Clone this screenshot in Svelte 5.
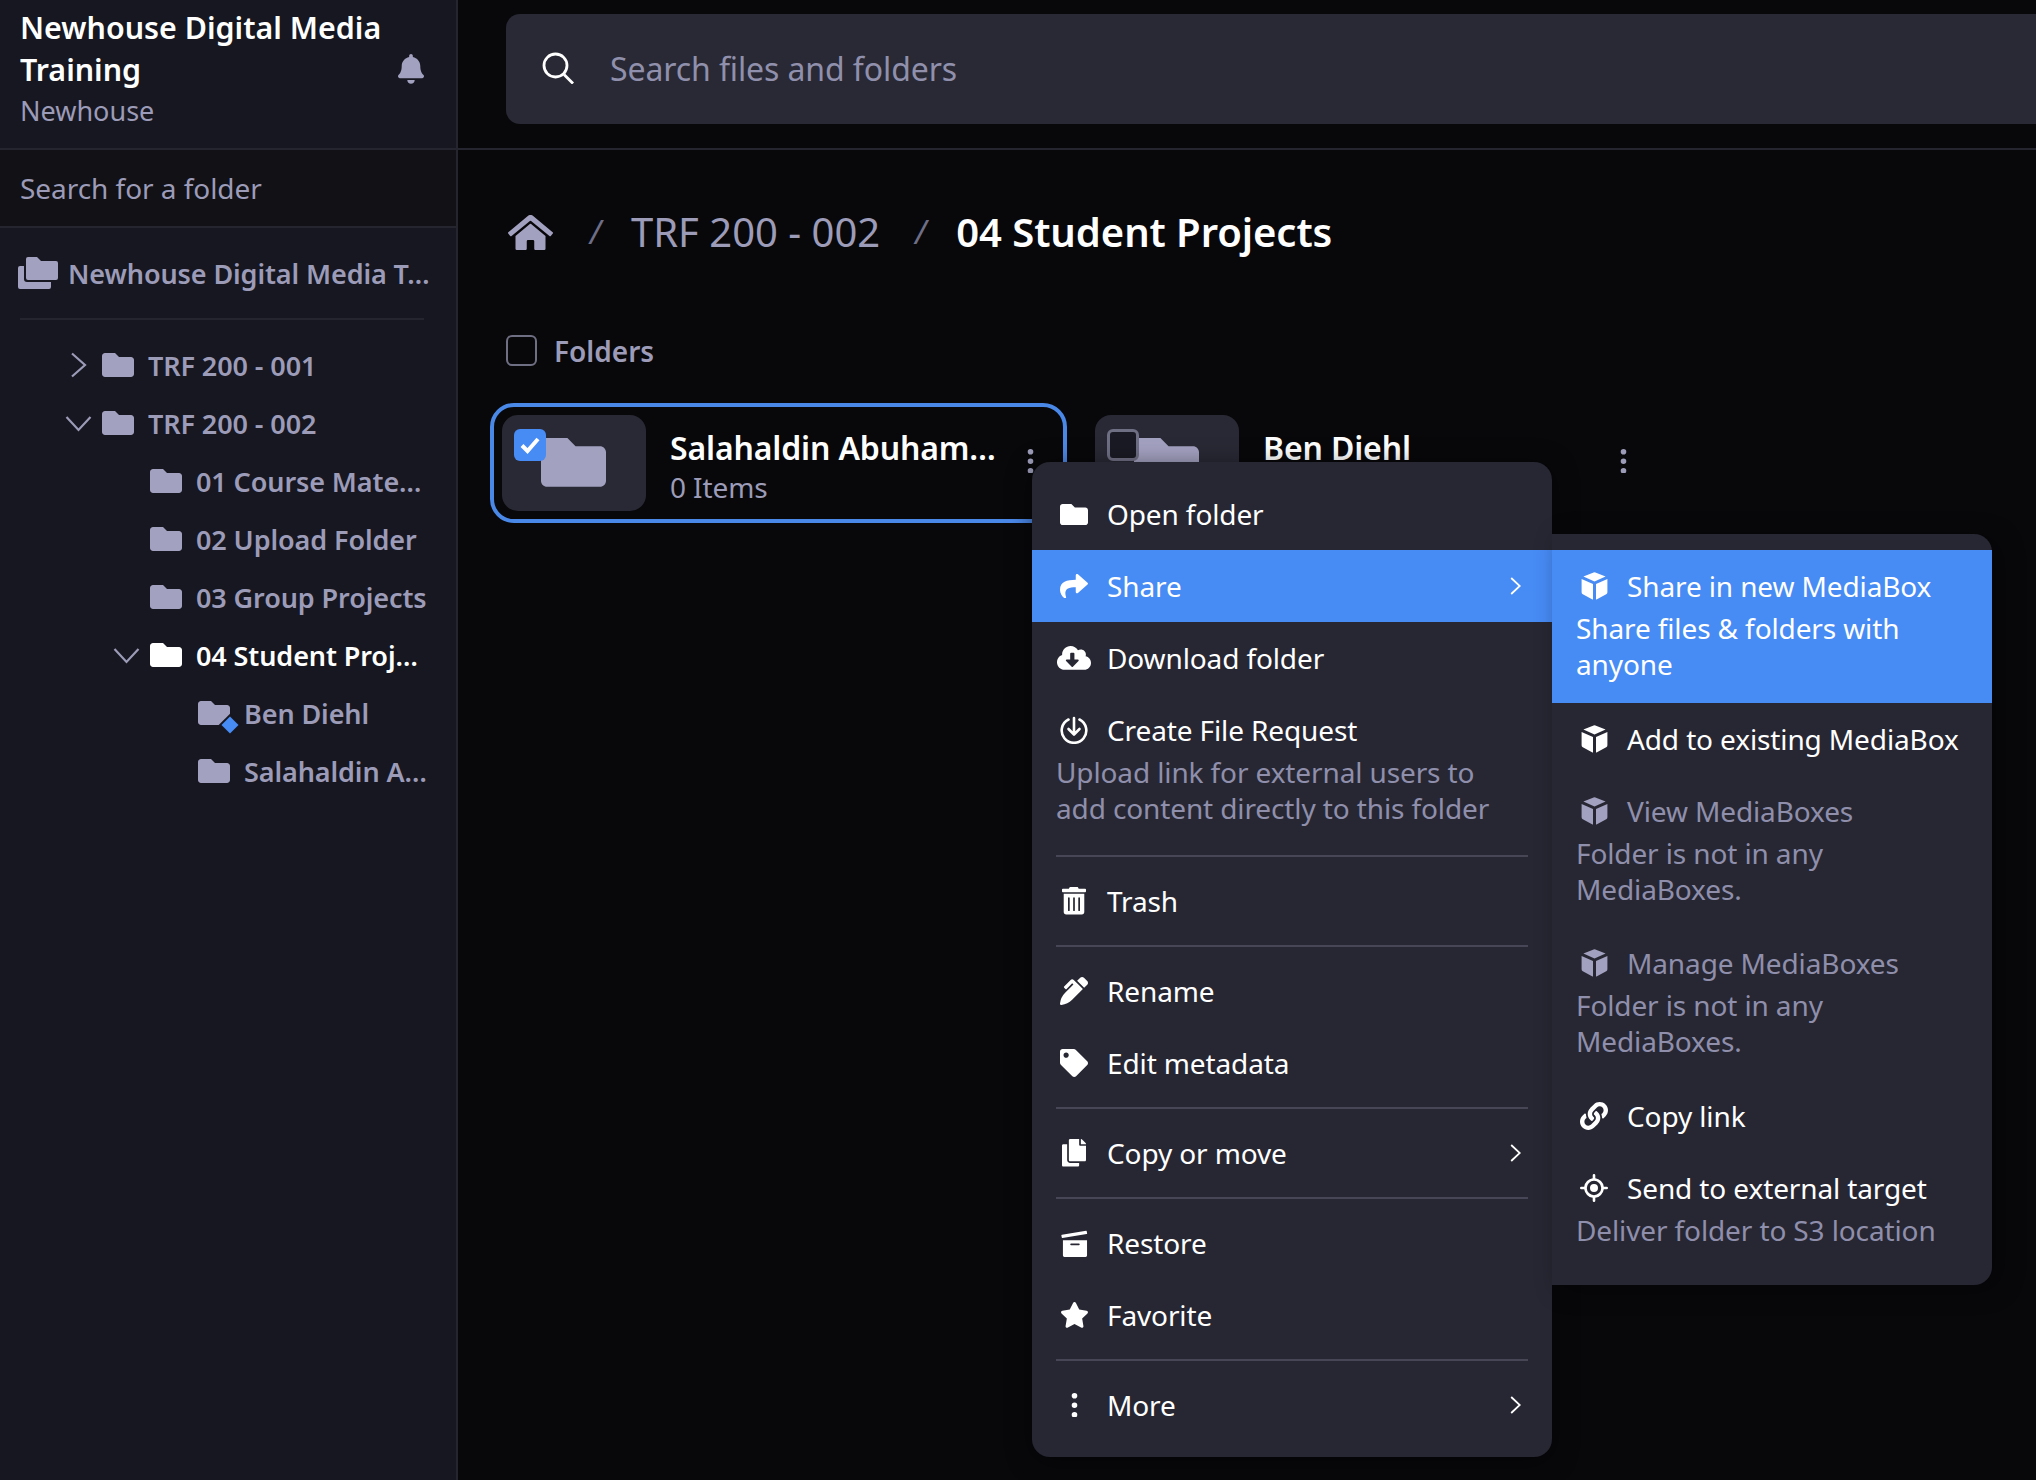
<script>
  const icons = {
    folder: { vb: '0 64 512 384', d: 'M464 128H272l-64-64H48C21.49 64 0 85.49 0 112v288c0 26.51 21.49 48 48 48h416c26.51 0 48-21.49 48-48V176c0-26.51-21.49-48-48-48z' },
    folders: { vb: '0 0 40 32', d: 'M0 11a2 2 0 0 1 2-2h4v13a3 3 0 0 0 3 3h24v5a2 2 0 0 1-2 2H2a2 2 0 0 1-2-2zM8 2a2 2 0 0 1 2-2h9l4 4h15a2 2 0 0 1 2 2v15a2 2 0 0 1-2 2H10a2 2 0 0 1-2-2z' },
    bell: { vb: '0 0 448 512', d: 'M224 512c35.32 0 63.97-28.65 63.97-64H160.03c0 35.35 28.65 64 63.97 64zm215.39-149.71c-19.32-20.76-55.47-51.99-55.47-154.29 0-77.7-54.48-139.9-127.94-155.16V32c0-17.67-14.32-32-31.98-32s-31.98 14.33-31.98 32v20.84C118.56 68.1 64.08 130.3 64.08 208c0 102.3-36.15 133.53-55.47 154.29-6 6.45-8.66 14.16-8.61 21.71.11 16.4 12.98 32 32.1 32h383.8c19.12 0 32-15.6 32.1-32 .05-7.55-2.61-15.27-8.61-21.71z' },
    home: { vb: '0 32 576 448', d: 'M280.37 148.26L96 300.11V464a16 16 0 0 0 16 16l112.06-.29a16 16 0 0 0 15.92-16V368a16 16 0 0 1 16-16h64a16 16 0 0 1 16 16v95.64a16 16 0 0 0 16 16.05L464 480a16 16 0 0 0 16-16V300L295.67 148.26a12.19 12.19 0 0 0-15.3 0zM571.6 251.47L318.47 43a48 48 0 0 0-61 0L4.34 251.47a12 12 0 0 0-1.6 16.9l25.5 31A12 12 0 0 0 45.15 301l235.22-193.74a12.19 12.19 0 0 1 15.3 0L530.9 301a12 12 0 0 0 16.9-1.6l25.5-31a12 12 0 0 0-1.7-16.93z' },
    share: { vb: '0 32 512 450', d: 'M503.691 189.836L327.687 37.851C312.281 24.546 288 35.347 288 56.015v80.053C127.371 137.907 0 170.1 0 322.326c0 61.441 39.581 122.309 83.333 154.132 13.653 9.931 33.111-2.533 28.077-18.631C66.066 312.814 132.917 274.316 288 272.085V360c0 20.7 24.3 31.453 39.687 18.164l176.004-152c11.071-9.562 11.086-26.753 0-36.328z' },
    cloud: { vb: '0 32 640 448', d: 'M537.6 226.6c4.1-10.7 6.4-22.4 6.4-34.6 0-53-43-96-96-96-19.7 0-38.1 6-53.3 16.2C367 64.2 315.3 32 256 32c-88.4 0-160 71.6-160 160 0 2.7.1 5.4.2 8.1C40.2 219.8 0 273.2 0 336c0 79.5 64.5 144 144 144h368c70.7 0 128-57.3 128-128 0-61.9-44-113.6-102.4-125.4zm-132.9 88.7L299.3 420.7c-6.2 6.2-16.4 6.2-22.6 0L171.3 315.3c-10.1-10.1-2.9-27.3 11.3-27.3H248V176c0-8.8 7.2-16 16-16h48c8.8 0 16 7.2 16 16v112h65.4c14.2 0 21.4 17.2 11.3 27.3z' },
    trash: { vb: '0 0 448 512', d: 'M32 464a48 48 0 0 0 48 48h288a48 48 0 0 0 48-48V128H32zm272-256a16 16 0 0 1 32 0v224a16 16 0 0 1-32 0zm-96 0a16 16 0 0 1 32 0v224a16 16 0 0 1-32 0zm-96 0a16 16 0 0 1 32 0v224a16 16 0 0 1-32 0zM432 32H312l-9.4-18.7A24 24 0 0 0 290.1 0H157.8a23.72 23.72 0 0 0-21.4 13.3L127 32H16A16 16 0 0 0 0 48v32a16 16 0 0 0 16 16h416a16 16 0 0 0 16-16V48a16 16 0 0 0-16-16z' },
    pen: { vb: '0 0 512 512', d: 'M497.94 74.17l-60.11-60.11c-18.75-18.75-49.16-18.75-67.91 0l-56.55 56.55 128.02 128.02 56.55-56.55c18.75-18.75 18.75-49.15 0-67.91zm-246.8-20.53c-15.62-15.62-40.94-15.62-56.56 0L75.8 172.43c-6.25 6.25-6.25 16.38 0 22.62l22.63 22.63c6.25 6.25 16.38 6.25 22.63 0l101.82-101.82 22.63 22.62L93.95 290.03A327.038 327.038 0 0 0 .17 485.11l-.03.23c-1.7 15.28 11.21 28.2 26.49 26.51a327.02 327.02 0 0 0 195.34-93.8l196.79-196.79-82.77-82.77-84.85-84.85z' },
    tag: { vb: '0 0 512 512', d: 'M0 252.118V48C0 21.49 21.49 0 48 0h204.118a48 48 0 0 1 33.941 14.059l211.882 211.882c18.745 18.745 18.745 49.137 0 67.882L293.823 497.941c-18.745 18.745-49.137 18.745-67.882 0L14.059 286.059A48 48 0 0 1 0 252.118zM112 64c-26.51 0-48 21.49-48 48s21.49 48 48 48 48-21.49 48-48-21.49-48-48-48z' },
    copy: { vb: '0 0 448 512', d: 'M320 448v40c0 13.255-10.745 24-24 24H24c-13.255 0-24-10.745-24-24V120c0-13.255 10.745-24 24-24h72v296c0 30.879 25.121 56 56 56h168zm0-344V0H152c-13.255 0-24 10.745-24 24v368c0 13.255 10.745 24 24 24h272c13.255 0 24-10.745 24-24V128H344c-13.2 0-24-10.8-24-24zm120.971-31.029L375.029 7.029A24 24 0 0 0 358.059 0H352v96h96v-6.059a24 24 0 0 0-7.029-16.97z' },
    restore: { vb: '0 0 28 28', d: 'M1 5L26 .8a.6.6 0 0 1 .7.5l.4 2.200a.6.6 0 0 1-.5.7L1.500 8.400a.6.6 0 0 1-.7-.5L.4 5.700A.6.6 0 0 1 1 5zM2 10.500h25v16a1.500 1.500 0 0 1-1.500 1.500h-22A1.500 1.500 0 0 1 2 26.500zm8.500 3.500a.9.9 0 0 0 0 1.800h8a.9.9 0 0 0 0-1.800z' },
    star: { vb: '0 0 576 512', d: 'M259.3 17.8L194 150.2 47.9 171.5c-26.2 3.8-36.7 36.1-17.7 54.6l105.7 103-25 145.5c-4.5 26.3 23.2 46 46.4 33.7L288 439.6l130.7 68.7c23.2 12.2 50.9-7.4 46.4-33.7l-25-145.5 105.7-103c19-18.5 8.5-50.8-17.7-54.6L382 150.2 316.7 17.8c-11.7-23.6-45.6-23.9-57.4 0z' },
    cube: { vb: '0 0 27 28', d: 'M12.600.4a2.400 2.400 0 0 1 1.800 0l10.200 4.100L13.500 9.400 2.400 4.500zM.6 7l11.400 5v15.500a2 2 0 0 1-1-.3L1.800 22.300A2.500 2.500 0 0 1 .6 20.200zM26.400 7l-11.400 5v15.500a2 2 0 0 0 1-.3l9.200-4.900a2.500 2.500 0 0 0 1.200-2.100z' },
    link: { vb: '0 0 512 512', d: 'M326.612 185.391c59.747 59.809 58.927 155.698.36 214.59-.11.12-.24.25-.36.37l-67.2 67.2c-59.27 59.27-155.699 59.262-214.96 0-59.27-59.26-59.27-155.7 0-214.96l37.106-37.106c9.84-9.84 26.786-3.3 27.294 10.606.648 17.722 3.826 35.527 9.69 52.721 1.986 5.822.567 12.262-3.783 16.612l-13.087 13.087c-28.026 28.026-28.905 73.66-1.155 101.96 28.024 28.579 74.086 28.749 102.325.51l67.2-67.19c28.191-28.191 28.073-73.757 0-101.83-3.701-3.694-7.429-6.564-10.341-8.569a16.037 16.037 0 0 1-6.947-12.606c-.396-10.567 3.348-21.456 11.698-29.806l21.054-21.055c5.521-5.521 14.182-6.199 20.584-1.731a152.482 152.482 0 0 1 20.522 17.197zM467.547 44.449c-59.261-59.262-155.69-59.27-214.96 0l-67.2 67.2c-.12.12-.25.25-.36.37-58.566 58.892-59.387 154.781.36 214.59a152.454 152.454 0 0 0 20.521 17.196c6.402 4.468 15.064 3.789 20.584-1.731l21.054-21.055c8.35-8.35 12.094-19.239 11.698-29.806a16.037 16.037 0 0 0-6.947-12.606c-2.912-2.005-6.64-4.875-10.341-8.569-28.073-28.073-28.191-73.639 0-101.83l67.2-67.19c28.239-28.239 74.3-28.069 102.325.51 27.75 28.3 26.872 73.934-1.155 101.96l-13.087 13.087c-4.35 4.35-5.769 10.79-3.783 16.612 5.864 17.194 9.042 34.999 9.69 52.721.509 13.906 17.454 20.446 27.294 10.606l37.106-37.106c59.271-59.259 59.271-155.699.001-214.959z' },
    target: { vb: '0 0 28 28', d: 'M14 0a1.300 1.300 0 0 1 1.300 1.300v2.900a10 10 0 0 1 8.500 8.500h2.900a1.300 1.300 0 0 1 0 2.600h-2.900a10 10 0 0 1-8.500 8.500v2.900a1.300 1.300 0 0 1-2.600 0v-2.900a10 10 0 0 1-8.500-8.500H1.300a1.300 1.300 0 0 1 0-2.600h2.900a10 10 0 0 1 8.500-8.500V1.300A1.300 1.300 0 0 1 14 0zm0 6.800a7.200 7.200 0 1 0 0 14.400 7.200 7.200 0 0 0 0-14.400zm0 3.200a4 4 0 1 1 0 8 4 4 0 0 1 0-8z' },
    dots: { vb: '0 0 8 28', d: 'M4 0a3.200 3.200 0 1 1 0 6.400A3.200 3.200 0 0 1 4 0zm0 10.800a3.200 3.200 0 1 1 0 6.400 3.200 3.200 0 0 1 0-6.400zm0 10.800a3.200 3.200 0 1 1 0 6.400 3.200 3.200 0 0 1 0-6.400z' }
  };

  const tree = [
    { label: 'TRF 200 - 001', depth: 0, chevron: 'right' },
    { label: 'TRF 200 - 002', depth: 0, chevron: 'down' },
    { label: '01 Course Mate…', depth: 1 },
    { label: '02 Upload Folder', depth: 1 },
    { label: '03 Group Projects', depth: 1 },
    { label: '04 Student Proj…', depth: 1, chevron: 'down', active: true },
    { label: 'Ben Diehl', depth: 2, badge: true },
    { label: 'Salahaldin A…', depth: 2 }
  ];

  const menu = [
    { icon: 'folder', w: 28, label: 'Open folder' },
    { icon: 'share', w: 28, label: 'Share', more: true, active: true },
    { icon: 'cloud', w: 34, label: 'Download folder' },
    { icon: 'request', w: 28, label: 'Create File Request', sub: ['Upload link for external users to', 'add content directly to this folder'] },
    { sep: true },
    { icon: 'trash', w: 24, label: 'Trash' },
    { sep: true },
    { icon: 'pen', w: 28, label: 'Rename' },
    { icon: 'tag', w: 28, label: 'Edit metadata' },
    { sep: true },
    { icon: 'copy', w: 24, label: 'Copy or move', more: true },
    { sep: true },
    { icon: 'restore', w: 27, label: 'Restore' },
    { icon: 'star', w: 29, label: 'Favorite' },
    { sep: true },
    { icon: 'dots', w: 7, label: 'More', more: true }
  ];

  const submenu = [
    { icon: 'cube', w: 27, label: 'Share in new MediaBox', sub: ['Share files & folders with', 'anyone'], active: true },
    { icon: 'cube', w: 27, label: 'Add to existing MediaBox' },
    { icon: 'cube', w: 27, label: 'View MediaBoxes', sub: ['Folder is not in any', 'MediaBoxes.'], disabled: true },
    { icon: 'cube', w: 27, label: 'Manage MediaBoxes', sub: ['Folder is not in any', 'MediaBoxes.'], disabled: true },
    { icon: 'link', w: 28, label: 'Copy link' },
    { icon: 'target', w: 28, label: 'Send to external target', sub: ['Deliver folder to S3 location'] }
  ];
</script>

{#snippet icon(name, w)}
  {#if name === 'request'}
    <svg class="ico" width={w} viewBox="0 0 28 28" fill="none" stroke="currentColor" stroke-width="2.600" stroke-linecap="round" stroke-linejoin="round">
      <path d="M8.500 3.500A12.300 12.300 0 1 0 19.500 3.500" />
      <path d="M14 2v16M8.500 13l5.500 5.500 5.500-5.500" />
    </svg>
  {:else}
    <svg class="ico" width={w} viewBox={icons[name].vb} fill="currentColor"><path d={icons[name].d} /></svg>
  {/if}
{/snippet}

{#snippet chevron(dir)}
  {#if dir === 'right'}
    <svg class="chev" width="17" height="26" viewBox="0 0 17 26" fill="none" stroke="currentColor" stroke-width="2.200"><path d="M2 1.500 15 13 2 24.500" /></svg>
  {:else}
    <svg class="chev" width="27" height="17" viewBox="0 0 27 17" fill="none" stroke="currentColor" stroke-width="2.200"><path d="M1.500 2 13.500 15 25.500 2" /></svg>
  {/if}
{/snippet}

{#snippet arrow()}
  <svg class="more" width="11" height="18" viewBox="0 0 11 18" fill="none" stroke="currentColor" stroke-width="1.800"><path d="M1.200 1 9.800 9 1.200 17" /></svg>
{/snippet}

{#snippet entry(item)}
  <div class="item" class:active={item.active} class:disabled={item.disabled} class:has-sub={item.sub}>
    <div class="item-head">
      <span class="item-icon">{@render icon(item.icon, item.w)}</span>
      <span class="item-label">{item.label}</span>
      {#if item.more}{@render arrow()}{/if}
    </div>
    {#if item.sub}
      <div class="item-sub">
        {#each item.sub as line}<div>{line}</div>{/each}
      </div>
    {/if}
  </div>
{/snippet}

<div class="page">
  <aside class="sidebar">
    <header class="org">
      <div class="org-text">
        <div class="org-name">Newhouse Digital Media<br />Training</div>
        <div class="org-sub">Newhouse</div>
      </div>
      <span class="bell">{@render icon('bell', 26)}</span>
    </header>
    <div class="folder-search">Search for a folder</div>
    <div class="root-row">
      <span class="root-icon">{@render icon('folders', 40)}</span>
      <span>Newhouse Digital Media T…</span>
    </div>
    <div class="root-line"></div>
    <nav class="tree">
      {#each tree as row}
        <div class="tree-row" class:active={row.active} style="padding-left: {60 + row.depth * 48}px">
          <span class="tree-slot">{#if row.chevron}{@render chevron(row.chevron)}{/if}</span>
          <span class="tree-folder">
            {@render icon('folder', 32)}
            {#if row.badge}<span class="diamond"></span>{/if}
          </span>
          <span class="tree-label">{row.label}</span>
        </div>
      {/each}
    </nav>
  </aside>

  <main class="main">
    <div class="topbar">
      <div class="search">
        <svg width="32" height="32" viewBox="0 0 32 32" fill="none" stroke="#fff" stroke-width="2.800"><circle cx="13.500" cy="13.500" r="11.500" /><path d="M22 22.500 31 31.500" /></svg>
        <span>Search files and folders</span>
      </div>
    </div>
    <div class="content">
      <div class="crumbs">
        <span class="home">{@render icon('home', 45)}</span>
        <span class="slash">/</span>
        <span class="crumb">TRF 200 - 002</span>
        <span class="slash">/</span>
        <span class="crumb current">04 Student Projects</span>
      </div>
      <div class="section">
        <span class="check"></span>
        <span>Folders</span>
      </div>
      <div class="cards">
        <div class="card selected">
          <div class="thumb">
            <span class="check on">
              <svg width="22" height="18" viewBox="0 0 22 18" fill="none" stroke="#fff" stroke-width="4"><path d="M3 9.500 8.500 15 19 3" /></svg>
            </span>
            <span class="thumb-folder">{@render icon('folder', 65)}</span>
          </div>
          <div class="info">
            <div class="name">Salahaldin Abuham…</div>
            <div class="count">0 Items</div>
          </div>
          <span class="card-dots">{@render icon('dots', 7)}</span>
        </div>
        <div class="card">
          <div class="thumb">
            <span class="check boxed"></span>
            <span class="thumb-folder">{@render icon('folder', 65)}</span>
          </div>
          <div class="info">
            <div class="name">Ben Diehl</div>
            <div class="count">0 Items</div>
          </div>
          <span class="card-dots">{@render icon('dots', 7)}</span>
        </div>
      </div>
    </div>
  </main>

  <div class="menu main-menu">
    {#each menu as item}
      {#if item.sep}
        <div class="sep"></div>
      {:else}
        {@render entry(item)}
      {/if}
    {/each}
  </div>

  <div class="menu sub-menu">
    {#each submenu as item}
      {@render entry(item)}
    {/each}
  </div>
</div>

<style>
  :global(body) {
    margin: 0;
    background: #08080b;
  }
  .page {
    position: relative;
    display: flex;
    width: 2036px;
    height: 1480px;
    overflow: hidden;
    background: #08080b;
    color: #9c9bb8;
    font-family: "Noto Sans", "Open Sans", sans-serif;
    font-size: 28px;
  }
  .ico {
    display: block;
    height: auto;
    flex: none;
  }

  /* sidebar */
  .sidebar {
    flex: none;
    box-sizing: border-box;
    width: 458px;
    background: #161720;
    border-right: 2px solid #25252f;
  }
  .org {
    box-sizing: border-box;
    height: 150px;
    padding: 7px 32px 0 20px;
    display: flex;
    align-items: flex-start;
    justify-content: space-between;
    border-bottom: 2px solid #25252f;
  }
  .org-name {
    color: #fff;
    font-size: 30.4px;
    font-weight: 600;
    line-height: 42px;
    white-space: nowrap;
  }
  .org-sub {
    font-size: 27px;
    line-height: 40px;
    color: #9c9bb8;
  }
  .bell {
    color: #a3a1c0;
    margin-top: 47px;
  }
  .folder-search {
    box-sizing: border-box;
    height: 78px;
    padding: 0 20px;
    line-height: 76px;
    letter-spacing: -0.05px;
    background: #111116;
    border-bottom: 2px solid #25252f;
  }
  .root-row {
    display: flex;
    align-items: center;
    height: 58px;
    margin-top: 16px;
    padding-left: 18px;
    gap: 10px;
    font-size: 27px;
    letter-spacing: -0.1px;
    font-weight: 600;
    white-space: nowrap;
    color: #9c9bb8;
  }
  .root-icon {
    color: #a3a1c0;
  }
  .root-line {
    height: 2px;
    margin: 16px 32px 16px 20px;
    background: #25252f;
  }
  .tree-row {
    display: flex;
    align-items: center;
    height: 58px;
    font-size: 27px;
    letter-spacing: -0.1px;
    font-weight: 600;
    white-space: nowrap;
  }
  .tree-row.active {
    color: #fff;
  }
  .tree-slot {
    flex: none;
    width: 36px;
    margin-right: 6px;
    display: flex;
    justify-content: center;
    color: #9c9bb8;
  }
  .tree-folder {
    position: relative;
    flex: none;
    width: 32px;
    margin-right: 14px;
    color: #a3a1c0;
  }
  .tree-row.active .tree-folder {
    color: #fff;
  }
  .diamond {
    position: absolute;
    right: -6px;
    bottom: -6px;
    width: 12px;
    height: 12px;
    background: #478bf5;
    transform: rotate(45deg);
    box-shadow: 0 0 0 2px #161720;
  }
  .chev {
    display: block;
  }

  /* main */
  .main {
    flex: 1;
    min-width: 0;
  }
  .topbar {
    box-sizing: border-box;
    height: 150px;
    padding: 14px 0 0 48px;
    border-bottom: 2px solid #25252f;
  }
  .search {
    height: 110px;
    display: flex;
    align-items: center;
    gap: 36px;
    padding: 0 0 2px 36px;
    box-sizing: border-box;
    border-radius: 14px 0 0 14px;
    background: #292935;
    font-size: 32px;
    letter-spacing: -0.1px;
    color: #9090ac;
  }
  .content {
    padding-left: 42px;
  }
  .crumbs {
    display: flex;
    align-items: center;
    height: 56px;
    margin-top: 53px;
    font-size: 40px;
    color: #9c9bb8;
  }
  .home {
    margin: 2px 2px 0 8px;
    color: #a3a1c0;
  }
  .slash {
    box-sizing: border-box;
    width: 76px;
    padding-left: 5px;
    text-align: center;
    font-size: 32px;
    font-weight: 400;
    color: #6e6e86;
    font-style: italic;
  }
  .crumb.current {
    color: #fff;
    font-weight: 600;
    letter-spacing: -0.06px;
  }
  .section {
    display: flex;
    align-items: center;
    gap: 17px;
    margin: 76px 0 0 6px;
    height: 31px;
    font-weight: 600;
  }
  .check {
    box-sizing: border-box;
    display: flex;
    align-items: center;
    justify-content: center;
    width: 31px;
    height: 31px;
    border: 2px solid #6f6f84;
    border-radius: 6px;
  }
  .cards {
    display: flex;
    gap: 16px;
    margin: 37px 0 0 -10px;
  }
  .card {
    box-sizing: border-box;
    display: flex;
    align-items: center;
    flex: none;
    width: 577px;
    height: 120px;
    padding: 8px 29px 8px 8px;
    border: 4px solid transparent;
    border-radius: 24px;
  }
  .card.selected {
    border-color: #4a88e8;
  }
  .thumb {
    position: relative;
    flex: none;
    width: 144px;
    height: 96px;
    border-radius: 16px;
    background: #292935;
  }
  .thumb-folder {
    position: absolute;
    left: 39px;
    top: 23px;
    color: #a3a1c0;
  }
  .thumb .check {
    position: absolute;
    z-index: 1;
    left: 12px;
    top: 14px;
    width: 32px;
    height: 32px;
    border-radius: 6px;
  }
  .thumb .check.on {
    background: #478bf5;
    border: none;
  }
  .thumb .check.boxed {
    background: #1a1a24;
    border: 3px solid #6f6f84;
  }
  .info {
    flex: 1;
    margin: 4px 0 0 24px;
    white-space: nowrap;
  }
  .name {
    color: #fff;
    font-size: 32px;
    font-weight: 600;
    letter-spacing: -0.15px;
    line-height: 44px;
  }
  .count {
    line-height: 34px;
    letter-spacing: -0.1px;
  }
  .card-dots {
    color: #9c9bb8;
    margin-top: -4px;
  }

  /* menus */
  .menu {
    position: absolute;
    box-sizing: border-box;
    padding: 16px 0;
    background: #272733;
    color: #fff;
    line-height: 36px;
    letter-spacing: -0.12px;
    white-space: nowrap;
  }
  .main-menu {
    z-index: 2;
    left: 1032px;
    top: 462px;
    width: 520px;
    border-radius: 18px;
    box-shadow: 0 4px 24px rgba(0, 0, 0, 0.5);
  }
  .sub-menu {
    z-index: 3;
    left: 1552px;
    top: 534px;
    width: 440px;
    height: 751px;
    border-radius: 0 18px 18px 0;
    box-shadow: 8px 4px 24px rgba(0, 0, 0, 0.4);
  }
  .item {
    padding: 18px 24px;
  }
  .item.has-sub {
    padding-bottom: 21px;
  }
  .sub-menu .item.has-sub {
    padding-bottom: 20.5px;
  }
  .item.active {
    background: #478bf5;
  }
  .item-head {
    display: flex;
    align-items: center;
    height: 36px;
  }
  .item-icon {
    flex: none;
    width: 36px;
    margin-right: 15px;
    display: flex;
    justify-content: center;
  }
  .item-label {
    flex: 1;
  }
  .more {
    display: block;
    margin-right: 7px;
  }
  .item-sub {
    margin-top: 6px;
    color: #8f8fac;
  }
  .item.active .item-sub {
    color: #fff;
  }
  .item.disabled .item-head {
    color: #8f8fac;
  }
  .item.disabled .item-icon {
    color: #a3a1c0;
  }
  .sep {
    height: 2px;
    margin: 8px 24px;
    background: #464657;
  }
</style>
